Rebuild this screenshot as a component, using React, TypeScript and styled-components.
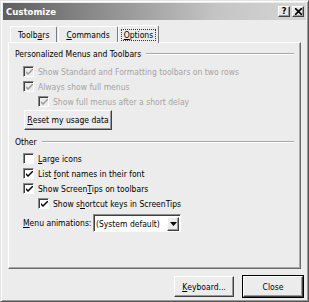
import React from 'react';
import styled, { createGlobalStyle } from 'styled-components';

const GlobalStyle = createGlobalStyle`
  html, body {
    margin: 0;
    padding: 0;
    background: #ececec;
  }
  body {
    font-family: 'DejaVu Sans Condensed', 'DejaVu Sans', Verdana, sans-serif;
    font-size: 8.5px;
    color: #000;
  }
`;

interface DisabledProps {
  $disabled?: boolean;
}

interface IndentProps {
  $indent?: boolean;
}

const Check = ({ checked, disabled }: { checked: boolean; disabled?: boolean }) => (
  <CheckBox $disabled={disabled}>
    {checked && (
      <svg width="7" height="7" viewBox="0 0 7 7">
        <path
          d="M0 2 L0 4 L2 6 L7 1 L7 -1 L2 4 Z"
          fill={disabled ? '#9a9a9a' : '#000'}
        />
      </svg>
    )}
  </CheckBox>
);

const App = () => {
  return (
    <>
      <GlobalStyle />
      <Dialog>
        <TitleBar>
          <Title>Customize</Title>
          <TitleButtons>
            <TitleButton>?</TitleButton>
            <TitleButton>
              <svg width="7" height="7" viewBox="0 0 7 7">
                <path d="M0 0 L7 7 M7 0 L0 7" stroke="#000" strokeWidth="1.6" />
              </svg>
            </TitleButton>
          </TitleButtons>
        </TitleBar>

        <Tabs>
          <Tab>
            Toolb<u>a</u>rs
          </Tab>
          <Tab>
            <u>C</u>ommands
          </Tab>
          <Tab $active>
            <Focus>
              <u>O</u>ptions
            </Focus>
          </Tab>
        </Tabs>

        <Panel>
          <GroupHeader>
            <span>Personalized Menus and Toolbars</span>
            <Rule />
          </GroupHeader>
          <Row $disabled>
            <Check checked disabled />
            <span>Show Standard and Formatting toolbars on two rows</span>
          </Row>
          <Row $disabled>
            <Check checked disabled />
            <span>Always show full menus</span>
          </Row>
          <Row $disabled $indent>
            <Check checked disabled />
            <span>Show full menus after a short delay</span>
          </Row>
          <ResetButton>
            <u>R</u>eset my usage data
          </ResetButton>

          <GroupHeader $other>
            <span>Other</span>
            <Rule />
          </GroupHeader>
          <Row>
            <Check checked={false} />
            <span>
              <u>L</u>arge icons
            </span>
          </Row>
          <Row>
            <Check checked />
            <span>
              List <u>f</u>ont names in their font
            </span>
          </Row>
          <Row>
            <Check checked />
            <span>
              Show Screen<u>T</u>ips on toolbars
            </span>
          </Row>
          <Row $indent>
            <Check checked />
            <span>
              Show s<u>h</u>ortcut keys in ScreenTips
            </span>
          </Row>
          <ComboRow>
            <ComboLabel>
              <u>M</u>enu animations:
            </ComboLabel>
            <Combo>
              <ComboText>(System default)</ComboText>
              <ComboArrow>
                <svg width="7" height="4" viewBox="0 0 7 4">
                  <path d="M0 0 L7 0 L3.5 4 Z" fill="#000" />
                </svg>
              </ComboArrow>
            </Combo>
          </ComboRow>
        </Panel>

        <Footer>
          <Button>
            <u>K</u>eyboard...
          </Button>
          <Button $default>Close</Button>
        </Footer>
      </Dialog>
    </>
  );
};

const Dialog = styled.div`
  width: 309px;
  height: 302px;
  box-sizing: border-box;
  background: #ececec;
  border-top: 1px solid #e4e4e4;
  border-left: 1px solid #e4e4e4;
  border-right: 1px solid #555;
  border-bottom: 1px solid #555;
  box-shadow: inset 1px 1px 0 #fff, inset -1px -1px 0 #9a9a9a;
  padding: 2px;
  display: flex;
  flex-direction: column;
`;

const TitleBar = styled.div`
  height: 17px;
  background: linear-gradient(to right, #5e5e5e, #8a8a8a 30%, #c4c4c4 70%, #d6d6d6);
  display: flex;
  align-items: center;
  justify-content: space-between;
  padding: 0 2px 0 3px;
`;

const Title = styled.div`
  color: #fff;
  font-weight: bold;
  font-size: 9.5px;
`;

const TitleButtons = styled.div`
  display: flex;
  gap: 2px;
`;

const TitleButton = styled.div`
  width: 12px;
  height: 11px;
  box-sizing: border-box;
  background: #e6e6e6;
  border-top: 1px solid #fff;
  border-left: 1px solid #fff;
  border-right: 1px solid #404040;
  border-bottom: 1px solid #404040;
  box-shadow: inset -1px -1px 0 #999;
  display: flex;
  align-items: center;
  justify-content: center;
  font-weight: bold;
  font-size: 9px;
  line-height: 1;
`;

const Tabs = styled.div`
  display: flex;
  align-items: flex-end;
  padding: 6px 0 0 7px;
  height: 16px;
  position: relative;
  z-index: 1;
`;

const Tab = styled.div<{ $active?: boolean }>`
  box-sizing: border-box;
  height: ${({ $active }) => ($active ? '18px' : '16px')};
  padding: 0 ${({ $active }) => ($active ? '3px' : '7px')};
  margin: ${({ $active }) => ($active ? '0 0 -1px -1px' : '0 1px 0 0')};
  background: #ececec;
  border-top: 1px solid #fff;
  border-left: 1px solid #fff;
  border-right: 1px solid #7a7a7a;
  border-radius: 2px 2px 0 0;
  display: flex;
  align-items: center;
`;

const Focus = styled.span`
  outline: 1px dotted #333;
  padding: 0 2px;
`;

const Panel = styled.div`
  margin: 0 5px 0 5px;
  height: 227px;
  box-sizing: border-box;
  border-top: 1px solid #fff;
  border-left: 1px solid #fff;
  border-right: 1px solid #6a6a6a;
  border-bottom: 1px solid #6a6a6a;
  box-shadow: inset -1px -1px 0 #a8a8a8;
  padding: 5px 0 0 6px;
  display: flex;
  flex-direction: column;
`;

const GroupHeader = styled.div<{ $other?: boolean }>`
  display: flex;
  align-items: center;
  height: 12px;
  margin-top: ${({ $other }) => ($other ? '6px' : '0')};
  margin-bottom: ${({ $other }) => ($other ? '3px' : '4px')};
  span {
    white-space: nowrap;
    margin-right: 5px;
  }
`;

const Rule = styled.div`
  flex: 1;
  height: 1px;
  margin-right: 6px;
  background: #a8a8a8;
  border-bottom: 1px solid #fff;
`;

const Row = styled.div<DisabledProps & IndentProps>`
  display: flex;
  align-items: center;
  height: 15px;
  padding-left: ${({ $indent }) => ($indent ? '23px' : '8px')};
  gap: 4px;
  color: ${({ $disabled }) => ($disabled ? '#a4a4a4' : '#000')};
  white-space: nowrap;
`;

const CheckBox = styled.div<DisabledProps>`
  width: 11px;
  height: 11px;
  box-sizing: border-box;
  background: ${({ $disabled }) => ($disabled ? '#ececec' : '#fff')};
  border-top: 1px solid #8a8a8a;
  border-left: 1px solid #8a8a8a;
  border-right: 1px solid #fff;
  border-bottom: 1px solid #fff;
  box-shadow: inset 1px 1px 0 #404040;
  display: flex;
  align-items: center;
  justify-content: center;
  padding: 1px 0 0 1px;
`;

const ButtonBase = styled.div`
  box-sizing: border-box;
  height: 20px;
  background: #ececec;
  border-top: 1px solid #fff;
  border-left: 1px solid #fff;
  border-right: 1px solid #404040;
  border-bottom: 1px solid #404040;
  box-shadow: inset -1px -1px 0 #9a9a9a;
  display: flex;
  align-items: center;
  justify-content: center;
  white-space: nowrap;
`;

const ResetButton = styled(ButtonBase)`
  width: 88px;
  margin: 1px 0 0 9px;
`;

const ComboRow = styled.div`
  display: flex;
  align-items: center;
  padding-left: 8px;
  margin-top: 3px;
`;

const ComboLabel = styled.span`
  width: 70px;
  white-space: nowrap;
`;

const Combo = styled.div`
  width: 88px;
  height: 18px;
  box-sizing: border-box;
  background: #fff;
  border-top: 1px solid #8a8a8a;
  border-left: 1px solid #8a8a8a;
  border-right: 1px solid #fff;
  border-bottom: 1px solid #fff;
  box-shadow: inset 1px 1px 0 #404040;
  display: flex;
  align-items: center;
  padding: 1px 1px 0 2px;
`;

const ComboText = styled.div`
  flex: 1;
  white-space: nowrap;
`;

const ComboArrow = styled(ButtonBase)`
  width: 12px;
  height: 14px;
`;

const Footer = styled.div`
  display: flex;
  justify-content: flex-end;
  gap: 9px;
  padding: 7px 3px 0 0;
`;

const Button = styled(ButtonBase)<{ $default?: boolean }>`
  width: 60px;
  height: 21px;
  outline: ${({ $default }) => ($default ? '1px solid #000' : 'none')};
`;

export default App;
